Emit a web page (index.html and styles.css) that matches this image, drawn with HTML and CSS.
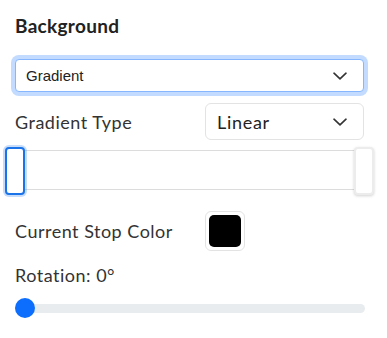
FILE: index.html
```html
<!DOCTYPE html>
<html lang="en">
<head>
    <meta charset="UTF-8">
    <meta name="viewport" content="width=device-width, initial-scale=1.0">
    <title>Background Settings</title>
    <link rel="stylesheet" href="styles.css">
</head>
<body>
    <div class="panel">
        <h3 class="section-title">Background</h3>

        <div class="select-box">
            <select class="form-select focused">
                <option>Gradient</option>
                <option>Solid</option>
                <option>Image</option>
            </select>
            <svg class="chevron" width="14" height="8" viewBox="0 0 14 8"><path d="M1 1.2 L7 6.8 L13 1.2" fill="none" stroke="#333" stroke-width="1.6" stroke-linecap="round" stroke-linejoin="round"/></svg>
        </div>

        <div class="field-row">
            <label class="field-label">Gradient Type</label>
            <div class="select-box">
                <select class="type-select">
                    <option>Linear</option>
                    <option>Radial</option>
                </select>
                <svg class="chevron" width="14" height="8" viewBox="0 0 14 8"><path d="M1 1.2 L7 6.8 L13 1.2" fill="none" stroke="#333" stroke-width="1.6" stroke-linecap="round" stroke-linejoin="round"/></svg>
            </div>
        </div>

        <div class="gradient-editor">
            <div class="gradient-bar"></div>
            <div class="stop-handle active" style="left: 0%;"></div>
            <div class="stop-handle" style="left: 100%;"></div>
        </div>

        <div class="field-row color-row">
            <label class="field-label">Current Stop Color</label>
            <div class="swatch"><div class="swatch-fill" style="background-color: #000;"></div></div>
        </div>

        <div class="rotation-label">Rotation: 0°</div>
        <input type="range" class="range" min="0" max="360" value="0">
    </div>
</body>
</html>
```

FILE: styles.css
```css
body {
    margin: 0;
    font-family: "Lato", sans-serif;
    color: #333;
    background-color: white;
}

.panel {
    width: 349px;
    padding: 14px 15px;
}

.section-title {
    margin: 0 0 21px;
    font-size: 19px;
    line-height: 24px;
    font-weight: 700;
    letter-spacing: 0.3px;
    color: #222;
}

.select-box {
    position: relative;
}

.chevron {
    position: absolute;
    right: 17px;
    top: 50%;
    margin-top: -4px;
    pointer-events: none;
}

select {
    appearance: none;
    -webkit-appearance: none;
    width: 100%;
    margin: 0;
    background-color: white;
    outline: none;
}

.form-select {
    display: block;
    height: 33px;
    padding: 0 40px 0 10px;
    border: 1px solid #86b7fe;
    border-radius: 4px;
    font-family: "Liberation Sans", Arial, sans-serif;
    font-size: 15px;
    color: #222;
}

.form-select.focused {
    box-shadow: 0 0 0 4px rgba(13, 110, 253, 0.25);
}

.field-row {
    display: grid;
    grid-template-columns: 190px 1fr;
    align-items: center;
    margin-top: 11px;
}

.field-label {
    font-size: 18px;
    line-height: 24px;
    letter-spacing: 0.5px;
    color: #333;
}

.type-select {
    display: block;
    height: 37px;
    padding: 0 40px 0 11px;
    border: 1px solid #e3e3e3;
    border-radius: 6px;
    font-family: "Lato", sans-serif;
    font-size: 18px;
    letter-spacing: 0.7px;
    color: #222;
}

.gradient-editor {
    position: relative;
    height: 46px;
    margin-top: 6px;
    padding-top: 4px;
}

.gradient-bar {
    height: 38px;
    border: 1px solid #dcdcdc;
    background-color: white;
}

.stop-handle {
    position: absolute;
    top: 1px;
    width: 16px;
    height: 44px;
    transform: translateX(-50%);
    background-color: white;
    border: 2px solid #ececec;
    border-radius: 4px;
    box-shadow: 0 1px 3px rgba(0, 0, 0, 0.18);
}

.stop-handle.active {
    border-color: #1a73e8;
    box-shadow: 0 0 0 2px rgba(26, 115, 232, 0.25);
}

.color-row {
    margin-top: 15px;
}

.swatch {
    width: 32px;
    height: 32px;
    padding: 3px;
    border: 1px solid #e3e3e3;
    border-radius: 6px;
}

.swatch-fill {
    width: 100%;
    height: 100%;
    border-radius: 5px;
}

.rotation-label {
    margin-top: 12px;
    font-size: 18px;
    line-height: 24px;
    letter-spacing: 0.5px;
    color: #333;
}

.range {
    display: block;
    appearance: none;
    -webkit-appearance: none;
    width: 350px;
    height: 20px;
    margin: 11px 0 0;
    background: transparent;
}

.range::-webkit-slider-runnable-track {
    height: 9px;
    border-radius: 5px;
    background-color: #e9ecef;
}

.range::-webkit-slider-thumb {
    -webkit-appearance: none;
    width: 20px;
    height: 20px;
    margin-top: -5.5px;
    border: none;
    border-radius: 50%;
    background-color: #0d6efd;
}
```
